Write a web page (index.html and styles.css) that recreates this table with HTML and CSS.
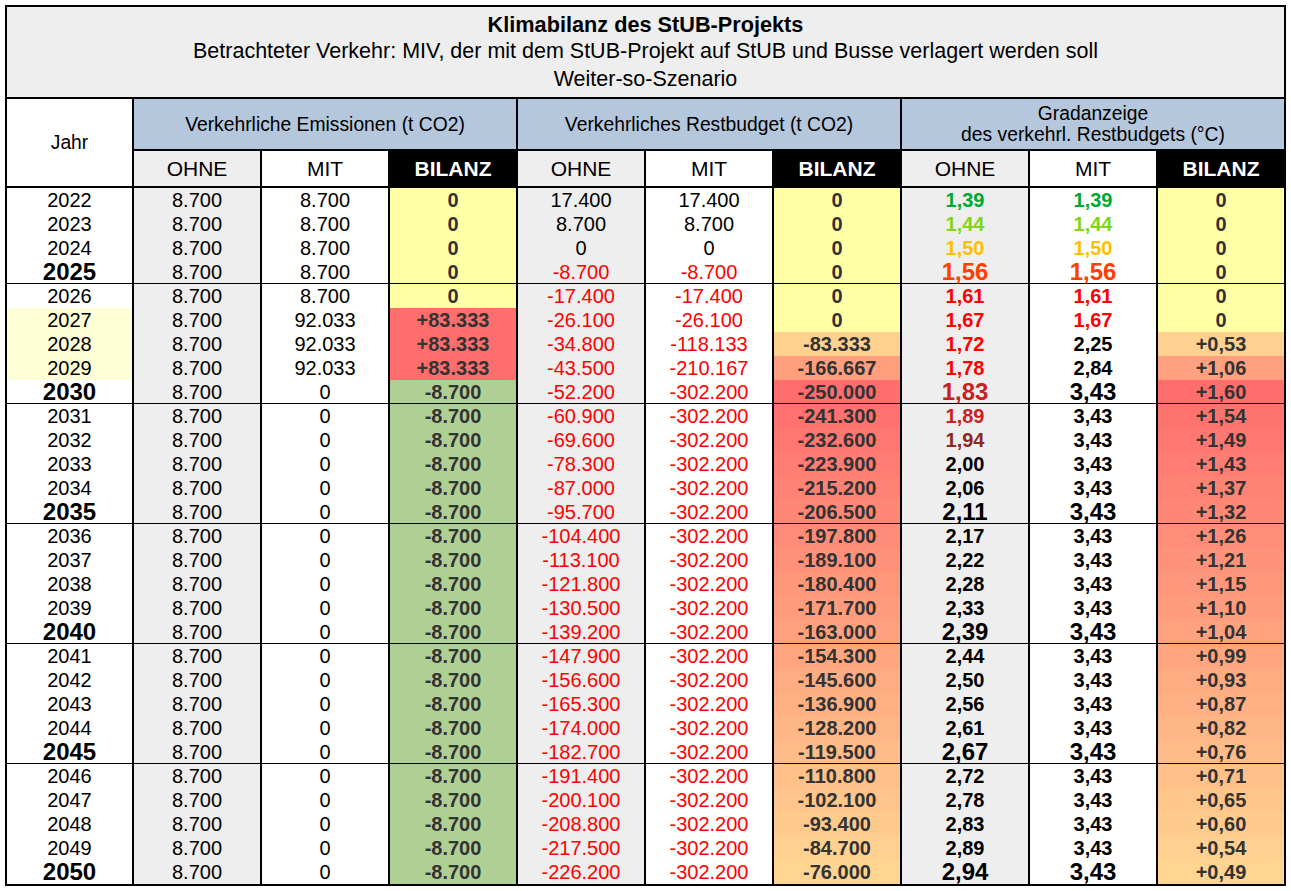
FILE: index.html
```html
<!DOCTYPE html>
<html lang="de">
<head>
<meta charset="utf-8">
<title>Klimabilanz des StUB-Projekts</title>
<link rel="stylesheet" href="styles.css">
</head>
<body>
<table class="sheet">
  <colgroup>
    <col class="col-jahr">
    <col class="col-d"><col class="col-d"><col class="col-d">
    <col class="col-d"><col class="col-d"><col class="col-d">
    <col class="col-d"><col class="col-d"><col class="col-last">
  </colgroup>
  <thead>
    <tr class="title-row">
      <th colspan="10" class="title">
        <div class="t1">Klimabilanz des StUB-Projekts</div>
        <div class="t2">Betrachteter Verkehr: MIV, der mit dem StUB-Projekt auf StUB und Busse verlagert werden soll</div>
        <div class="t2">Weiter-so-Szenario</div>
      </th>
    </tr>
    <tr class="group-row">
      <th rowspan="2" class="jahr-h">Jahr</th>
      <th colspan="3" class="grp">Verkehrliche Emissionen (t CO2)</th>
      <th colspan="3" class="grp">Verkehrliches Restbudget (t CO2)</th>
      <th colspan="3" class="grp grp-last">Gradanzeige<br>des verkehrl. Restbudgets (°C)</th>
    </tr>
    <tr class="sub-row">
      <th class="h-ohne">OHNE</th><th class="h-mit">MIT</th><th class="h-bil">BILANZ</th>
      <th class="h-ohne">OHNE</th><th class="h-mit">MIT</th><th class="h-bil">BILANZ</th>
      <th class="h-ohne">OHNE</th><th class="h-mit">MIT</th><th class="h-bil last">BILANZ</th>
    </tr>
  </thead>
  <tbody>
    <tr><td class="yr">2022</td><td class="ohne">8.700</td><td class="mit">8.700</td><td class="bil yel">0</td><td class="ohne">17.400</td><td class="mit">17.400</td><td class="bil yel">0</td><td class="ohne gr g1">1,39</td><td class="mit gr g1">1,39</td><td class="bil yel last">0</td></tr>
    <tr><td class="yr">2023</td><td class="ohne">8.700</td><td class="mit">8.700</td><td class="bil yel">0</td><td class="ohne">8.700</td><td class="mit">8.700</td><td class="bil yel">0</td><td class="ohne gr g2">1,44</td><td class="mit gr g2">1,44</td><td class="bil yel last">0</td></tr>
    <tr><td class="yr">2024</td><td class="ohne">8.700</td><td class="mit">8.700</td><td class="bil yel">0</td><td class="ohne">0</td><td class="mit">0</td><td class="bil yel">0</td><td class="ohne gr g3">1,50</td><td class="mit gr g3">1,50</td><td class="bil yel last">0</td></tr>
    <tr class="sep"><td class="yr big">2025</td><td class="ohne">8.700</td><td class="mit">8.700</td><td class="bil yel">0</td><td class="ohne neg">-8.700</td><td class="mit neg">-8.700</td><td class="bil yel">0</td><td class="ohne big g4">1,56</td><td class="mit big g4">1,56</td><td class="bil yel last">0</td></tr>
    <tr><td class="yr">2026</td><td class="ohne">8.700</td><td class="mit">8.700</td><td class="bil yel">0</td><td class="ohne neg">-17.400</td><td class="mit neg">-17.400</td><td class="bil yel">0</td><td class="ohne gr g5">1,61</td><td class="mit gr g5">1,61</td><td class="bil yel last">0</td></tr>
    <tr><td class="yr pale">2027</td><td class="ohne">8.700</td><td class="mit">92.033</td><td class="bil red">+83.333</td><td class="ohne neg">-26.100</td><td class="mit neg">-26.100</td><td class="bil yel">0</td><td class="ohne gr g5">1,67</td><td class="mit gr g5">1,67</td><td class="bil yel last">0</td></tr>
    <tr><td class="yr pale">2028</td><td class="ohne">8.700</td><td class="mit">92.033</td><td class="bil red">+83.333</td><td class="ohne neg">-34.800</td><td class="mit neg">-118.133</td><td class="bil scale" style="--t:0.042">-83.333</td><td class="ohne gr g5">1,72</td><td class="mit gr">2,25</td><td class="bil scale last" style="--t:0.036">+0,53</td></tr>
    <tr><td class="yr pale">2029</td><td class="ohne">8.700</td><td class="mit">92.033</td><td class="bil red">+83.333</td><td class="ohne neg">-43.500</td><td class="mit neg">-210.167</td><td class="bil scale" style="--t:0.521">-166.667</td><td class="ohne gr g5">1,78</td><td class="mit gr">2,84</td><td class="bil scale last" style="--t:0.514">+1,06</td></tr>
    <tr class="sep"><td class="yr big">2030</td><td class="ohne">8.700</td><td class="mit">0</td><td class="bil grn">-8.700</td><td class="ohne neg">-52.200</td><td class="mit neg">-302.200</td><td class="bil scale" style="--t:1">-250.000</td><td class="ohne big g6">1,83</td><td class="mit big">3,43</td><td class="bil scale last" style="--t:1">+1,60</td></tr>
    <tr><td class="yr">2031</td><td class="ohne">8.700</td><td class="mit">0</td><td class="bil grn">-8.700</td><td class="ohne neg">-60.900</td><td class="mit neg">-302.200</td><td class="bil scale" style="--t:0.95">-241.300</td><td class="ohne gr g6">1,89</td><td class="mit gr">3,43</td><td class="bil scale last" style="--t:0.946">+1,54</td></tr>
    <tr><td class="yr">2032</td><td class="ohne">8.700</td><td class="mit">0</td><td class="bil grn">-8.700</td><td class="ohne neg">-69.600</td><td class="mit neg">-302.200</td><td class="bil scale" style="--t:0.9">-232.600</td><td class="ohne gr g7">1,94</td><td class="mit gr">3,43</td><td class="bil scale last" style="--t:0.901">+1,49</td></tr>
    <tr><td class="yr">2033</td><td class="ohne">8.700</td><td class="mit">0</td><td class="bil grn">-8.700</td><td class="ohne neg">-78.300</td><td class="mit neg">-302.200</td><td class="bil scale" style="--t:0.85">-223.900</td><td class="ohne gr">2,00</td><td class="mit gr">3,43</td><td class="bil scale last" style="--t:0.847">+1,43</td></tr>
    <tr><td class="yr">2034</td><td class="ohne">8.700</td><td class="mit">0</td><td class="bil grn">-8.700</td><td class="ohne neg">-87.000</td><td class="mit neg">-302.200</td><td class="bil scale" style="--t:0.8">-215.200</td><td class="ohne gr">2,06</td><td class="mit gr">3,43</td><td class="bil scale last" style="--t:0.793">+1,37</td></tr>
    <tr class="sep"><td class="yr big">2035</td><td class="ohne">8.700</td><td class="mit">0</td><td class="bil grn">-8.700</td><td class="ohne neg">-95.700</td><td class="mit neg">-302.200</td><td class="bil scale" style="--t:0.75">-206.500</td><td class="ohne big">2,11</td><td class="mit big">3,43</td><td class="bil scale last" style="--t:0.748">+1,32</td></tr>
    <tr><td class="yr">2036</td><td class="ohne">8.700</td><td class="mit">0</td><td class="bil grn">-8.700</td><td class="ohne neg">-104.400</td><td class="mit neg">-302.200</td><td class="bil scale" style="--t:0.7">-197.800</td><td class="ohne gr">2,17</td><td class="mit gr">3,43</td><td class="bil scale last" style="--t:0.694">+1,26</td></tr>
    <tr><td class="yr">2037</td><td class="ohne">8.700</td><td class="mit">0</td><td class="bil grn">-8.700</td><td class="ohne neg">-113.100</td><td class="mit neg">-302.200</td><td class="bil scale" style="--t:0.65">-189.100</td><td class="ohne gr">2,22</td><td class="mit gr">3,43</td><td class="bil scale last" style="--t:0.649">+1,21</td></tr>
    <tr><td class="yr">2038</td><td class="ohne">8.700</td><td class="mit">0</td><td class="bil grn">-8.700</td><td class="ohne neg">-121.800</td><td class="mit neg">-302.200</td><td class="bil scale" style="--t:0.6">-180.400</td><td class="ohne gr">2,28</td><td class="mit gr">3,43</td><td class="bil scale last" style="--t:0.595">+1,15</td></tr>
    <tr><td class="yr">2039</td><td class="ohne">8.700</td><td class="mit">0</td><td class="bil grn">-8.700</td><td class="ohne neg">-130.500</td><td class="mit neg">-302.200</td><td class="bil scale" style="--t:0.55">-171.700</td><td class="ohne gr">2,33</td><td class="mit gr">3,43</td><td class="bil scale last" style="--t:0.55">+1,10</td></tr>
    <tr class="sep"><td class="yr big">2040</td><td class="ohne">8.700</td><td class="mit">0</td><td class="bil grn">-8.700</td><td class="ohne neg">-139.200</td><td class="mit neg">-302.200</td><td class="bil scale" style="--t:0.5">-163.000</td><td class="ohne big">2,39</td><td class="mit big">3,43</td><td class="bil scale last" style="--t:0.495">+1,04</td></tr>
    <tr><td class="yr">2041</td><td class="ohne">8.700</td><td class="mit">0</td><td class="bil grn">-8.700</td><td class="ohne neg">-147.900</td><td class="mit neg">-302.200</td><td class="bil scale" style="--t:0.45">-154.300</td><td class="ohne gr">2,44</td><td class="mit gr">3,43</td><td class="bil scale last" style="--t:0.45">+0,99</td></tr>
    <tr><td class="yr">2042</td><td class="ohne">8.700</td><td class="mit">0</td><td class="bil grn">-8.700</td><td class="ohne neg">-156.600</td><td class="mit neg">-302.200</td><td class="bil scale" style="--t:0.4">-145.600</td><td class="ohne gr">2,50</td><td class="mit gr">3,43</td><td class="bil scale last" style="--t:0.396">+0,93</td></tr>
    <tr><td class="yr">2043</td><td class="ohne">8.700</td><td class="mit">0</td><td class="bil grn">-8.700</td><td class="ohne neg">-165.300</td><td class="mit neg">-302.200</td><td class="bil scale" style="--t:0.35">-136.900</td><td class="ohne gr">2,56</td><td class="mit gr">3,43</td><td class="bil scale last" style="--t:0.342">+0,87</td></tr>
    <tr><td class="yr">2044</td><td class="ohne">8.700</td><td class="mit">0</td><td class="bil grn">-8.700</td><td class="ohne neg">-174.000</td><td class="mit neg">-302.200</td><td class="bil scale" style="--t:0.3">-128.200</td><td class="ohne gr">2,61</td><td class="mit gr">3,43</td><td class="bil scale last" style="--t:0.297">+0,82</td></tr>
    <tr class="sep"><td class="yr big">2045</td><td class="ohne">8.700</td><td class="mit">0</td><td class="bil grn">-8.700</td><td class="ohne neg">-182.700</td><td class="mit neg">-302.200</td><td class="bil scale" style="--t:0.25">-119.500</td><td class="ohne big">2,67</td><td class="mit big">3,43</td><td class="bil scale last" style="--t:0.243">+0,76</td></tr>
    <tr><td class="yr">2046</td><td class="ohne">8.700</td><td class="mit">0</td><td class="bil grn">-8.700</td><td class="ohne neg">-191.400</td><td class="mit neg">-302.200</td><td class="bil scale" style="--t:0.2">-110.800</td><td class="ohne gr">2,72</td><td class="mit gr">3,43</td><td class="bil scale last" style="--t:0.198">+0,71</td></tr>
    <tr><td class="yr">2047</td><td class="ohne">8.700</td><td class="mit">0</td><td class="bil grn">-8.700</td><td class="ohne neg">-200.100</td><td class="mit neg">-302.200</td><td class="bil scale" style="--t:0.15">-102.100</td><td class="ohne gr">2,78</td><td class="mit gr">3,43</td><td class="bil scale last" style="--t:0.144">+0,65</td></tr>
    <tr><td class="yr">2048</td><td class="ohne">8.700</td><td class="mit">0</td><td class="bil grn">-8.700</td><td class="ohne neg">-208.800</td><td class="mit neg">-302.200</td><td class="bil scale" style="--t:0.1">-93.400</td><td class="ohne gr">2,83</td><td class="mit gr">3,43</td><td class="bil scale last" style="--t:0.099">+0,60</td></tr>
    <tr><td class="yr">2049</td><td class="ohne">8.700</td><td class="mit">0</td><td class="bil grn">-8.700</td><td class="ohne neg">-217.500</td><td class="mit neg">-302.200</td><td class="bil scale" style="--t:0.05">-84.700</td><td class="ohne gr">2,89</td><td class="mit gr">3,43</td><td class="bil scale last" style="--t:0.045">+0,54</td></tr>
    <tr><td class="yr big">2050</td><td class="ohne">8.700</td><td class="mit">0</td><td class="bil grn">-8.700</td><td class="ohne neg">-226.200</td><td class="mit neg">-302.200</td><td class="bil scale" style="--t:0">-76.000</td><td class="ohne big">2,94</td><td class="mit big">3,43</td><td class="bil scale last" style="--t:0">+0,49</td></tr>
  </tbody>
</table>
</body>
</html>
```
FILE: styles.css
```css
html, body {
  margin: 0;
  padding: 0;
  background: #ffffff;
}

body {
  padding: 5px;
  font-family: "Liberation Sans", Arial, sans-serif;
  color: #000000;
}

.sheet {
  box-sizing: border-box;
  width: 1281px;
  table-layout: fixed;
  border-collapse: separate;
  border-spacing: 0;
  border: 2px solid #000000;
}

.col-jahr { width: 127px; }
.col-d { width: 128px; }
.col-last { width: 126px; }

.sheet th,
.sheet td {
  box-sizing: border-box;
  padding: 0;
  text-align: center;
  vertical-align: middle;
  white-space: nowrap;
  overflow: visible;
}

/* ---------- title ---------- */
.title-row { height: 92px; }

.title {
  background: #eeeeee;
  border-bottom: 2px solid #000000;
  font-weight: normal;
  padding-bottom: 2px;
}

.t1 {
  font-size: 21.7px;
  font-weight: bold;
  line-height: 27.3px;
}

.t2 {
  font-size: 21.5px;
  line-height: 27.3px;
}

/* ---------- group header ---------- */
.group-row { height: 52px; }

.jahr-h {
  background: #ffffff;
  font-weight: normal;
  font-size: 19.3px;
  border-right: 2px solid #000000;
  border-bottom: 2px solid #000000;
}

.grp {
  background: #b4c7dc;
  font-weight: normal;
  font-size: 19.3px;
  line-height: 21px;
  border-right: 2px solid #000000;
  border-bottom: 2px solid #000000;
}

.grp-last { border-right: none; }

/* ---------- sub header ---------- */
.sub-row { height: 37px; }

.sub-row th {
  font-size: 21px;
  font-weight: normal;
  padding-top: 1px;
  border-right: 2px solid #000000;
  border-bottom: 2px solid #000000;
}

.sub-row th.last { border-right: none; }

.h-ohne { background: #eeeeee; }
.h-mit { background: #ffffff; }

.sub-row th.h-bil {
  background: #000000;
  color: #ffffff;
  font-weight: bold;
}

/* ---------- data ---------- */
tbody tr { height: 24px; }

tbody td {
  font-size: 20px;
  line-height: 20px;
  border-right: 2px solid #000000;
}

tbody td.last { border-right: none; }

tbody tr.sep td { border-bottom: 1px solid #000000; }

.yr { background: #ffffff; }
.yr.pale { background: #ffffd7; }

.ohne { background: #eeeeee; }
.mit { background: #ffffff; }

.bil {
  font-weight: bold;
  color: #333333;
}

.yel { background: #ffffa6; }
.red { background: #ff6d6d; }
.grn { background: #afd095; }

.scale {
  background: rgb(255, calc(213 - 104 * var(--t)), calc(145 - 36 * var(--t)));
}

.neg { color: #ff0000; }

.gr { font-weight: bold; }

.big {
  font-size: 24px;
  font-weight: bold;
  padding-top: 2px;
}

.g1 { color: #00a933; }
.g2 { color: #81d41a; }
.g3 { color: #ffbf00; }
.g4 { color: #ff4000; }
.g5 { color: #ff0000; }
.g6 { color: #c9211e; }
.g7 { color: #8d281e; }
```
